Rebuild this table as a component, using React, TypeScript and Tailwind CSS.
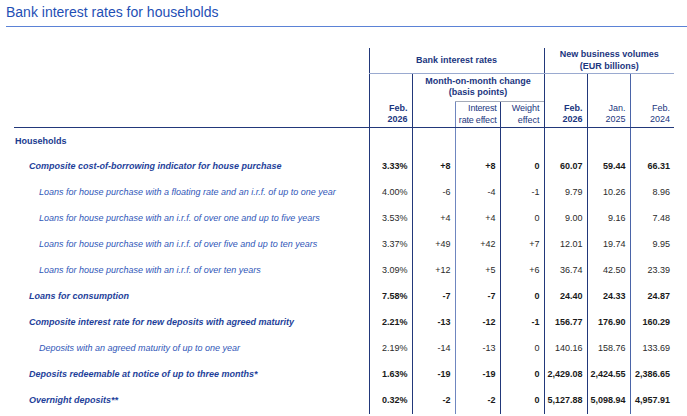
const rows = [
  { label: "Households", level: 0, values: null },
  {
    label: "Composite cost-of-borrowing indicator for house purchase",
    level: 1,
    values: ["3.33%", "+8", "+8", "0", "60.07", "59.44", "66.31"],
  },
  {
    label: "Loans for house purchase with a floating rate and an i.r.f. of up to one year",
    level: 2,
    values: ["4.00%", "-6", "-4", "-1", "9.79", "10.26", "8.96"],
  },
  {
    label: "Loans for house purchase with an i.r.f. of over one and up to five years",
    level: 2,
    values: ["3.53%", "+4", "+4", "0", "9.00", "9.16", "7.48"],
  },
  {
    label: "Loans for house purchase with an i.r.f. of over five and up to ten years",
    level: 2,
    values: ["3.37%", "+49", "+42", "+7", "12.01", "19.74", "9.95"],
  },
  {
    label: "Loans for house purchase with an i.r.f. of over ten years",
    level: 2,
    values: ["3.09%", "+12", "+5", "+6", "36.74", "42.50", "23.39"],
  },
  {
    label: "Loans for consumption",
    level: 1,
    values: ["7.58%", "-7", "-7", "0", "24.40", "24.33", "24.87"],
  },
  {
    label: "Composite interest rate for new deposits with agreed maturity",
    level: 1,
    values: ["2.21%", "-13", "-12", "-1", "156.77", "176.90", "160.29"],
  },
  {
    label: "Deposits with an agreed maturity of up to one year",
    level: 2,
    values: ["2.19%", "-14", "-13", "0", "140.16", "158.76", "133.69"],
  },
  {
    label: "Deposits redeemable at notice of up to three months*",
    level: 1,
    values: ["1.63%", "-19", "-19", "0", "2,429.08", "2,424.55", "2,386.65"],
  },
  {
    label: "Overnight deposits**",
    level: 1,
    values: ["0.32%", "-2", "-2", "0", "5,127.88", "5,098.94", "4,957.91"],
  },
];

// left border colour per value column (cols 2..8)
const lineCls = [
  "border-l border-[#22387a]",
  "border-l border-[#22387a]",
  "border-l border-[#6f86bf]",
  "border-l border-[#22387a]",
  "border-l border-[#22387a]",
  "border-l border-[#22387a]",
  "border-l border-[#4a64a8]",
];

export default function App() {
  return (
    <div className="w-[687px] h-[416px] bg-white overflow-hidden font-['Liberation_Sans',Arial,sans-serif]">
      <div className="ml-[6px] h-[27px] pt-[4px] border-b border-[#5b82d6]">
        <h1 className="text-[14px] leading-[16px] text-[#1f4fb5]">
          Bank interest rates for households
        </h1>
      </div>

      <table className="ml-[14px] mt-[21px] w-[660px] table-fixed border-collapse text-[9px]">
        <colgroup>
          <col className="w-[355px]" />
          <col className="w-[43px]" />
          <col className="w-[43px]" />
          <col className="w-[45px]" />
          <col className="w-[44px]" />
          <col className="w-[43px]" />
          <col className="w-[43px]" />
          <col className="w-[44px]" />
        </colgroup>
        <thead className="text-[#1b3680] font-bold whitespace-nowrap">
          <tr className="h-[25px]">
            <th rowSpan={3} className="p-0 border-b border-[#22387a]"></th>
            <th
              colSpan={4}
              className="p-0 border-l border-[#22387a] border-b border-b-[#9aaad0] text-center align-middle leading-[11px]"
            >
              Bank interest rates
            </th>
            <th
              colSpan={3}
              className="p-0 border-l border-[#22387a] border-b border-b-[#9aaad0] text-center align-middle leading-[12px]"
            >
              New business volumes
              <br />
              (EUR billions)
            </th>
          </tr>
          <tr className="h-[28px]">
            <th
              rowSpan={2}
              className="p-0 border-l border-[#22387a] border-b text-right align-bottom pr-[4px] pb-[2px] leading-[11px]"
            >
              Feb.
              <br />
              2026
            </th>
            <th
              colSpan={3}
              className="p-0 border-l border-[#22387a] text-center align-middle leading-[11px]"
            >
              Month-on-month change
              <br />
              (basis points)
            </th>
            <th
              rowSpan={2}
              className="p-0 border-l border-[#22387a] border-b text-right align-bottom pr-[4px] pb-[2px] leading-[11px]"
            >
              Feb.
              <br />
              2026
            </th>
            <th
              rowSpan={2}
              className="p-0 border-l border-[#22387a] border-b text-right align-bottom pr-[4px] pb-[2px] leading-[11px] font-normal"
            >
              Jan.
              <br />
              2025
            </th>
            <th
              rowSpan={2}
              className="p-0 border-l border-[#4a64a8] border-b border-b-[#22387a] text-right align-bottom pr-[4px] pb-[2px] leading-[11px] font-normal"
            >
              Feb.
              <br />
              2024
            </th>
          </tr>
          <tr className="h-[26px]">
            <th className="p-0 border-l border-[#22387a] border-b"></th>
            <th className="p-0 border-l border-[#6f86bf] border-t border-t-[#a5abb8] border-b border-b-[#22387a] text-right align-middle pr-[3px] leading-[12px] font-normal tracking-[-0.2px]">
              Interest
              <br />
              rate effect
            </th>
            <th className="p-0 border-l border-[#22387a] border-t border-t-[#a5abb8] border-b text-right align-middle pr-[4px] leading-[12px] font-normal">
              Weight
              <br />
              effect
            </th>
          </tr>
        </thead>
        <tbody>
          {rows.map((r) => (
            <tr key={r.label} className={r.level === 0 ? "h-[27px]" : "h-[26px]"}>
              <td
                className={
                  r.level === 0
                    ? "p-0 pl-[1px] pt-[2px] font-bold text-[#1a3a8f] whitespace-nowrap"
                    : r.level === 1
                    ? "p-0 pl-[15px] font-bold italic text-[#1e3f9a] whitespace-nowrap"
                    : "p-0 pl-[25px] italic text-[#2f56b8] whitespace-nowrap"
                }
              >
                {r.label}
              </td>
              {lineCls.map((lc, i) => (
                <td
                  key={i}
                  className={`p-0 ${lc} text-right pr-[4px] whitespace-nowrap ${
                    r.level === 1 ? "font-bold text-[#1a1a1a]" : "text-[#2a2a2a]"
                  }`}
                >
                  {r.values ? r.values[i] : ""}
                </td>
              ))}
            </tr>
          ))}
        </tbody>
      </table>
    </div>
  );
}
